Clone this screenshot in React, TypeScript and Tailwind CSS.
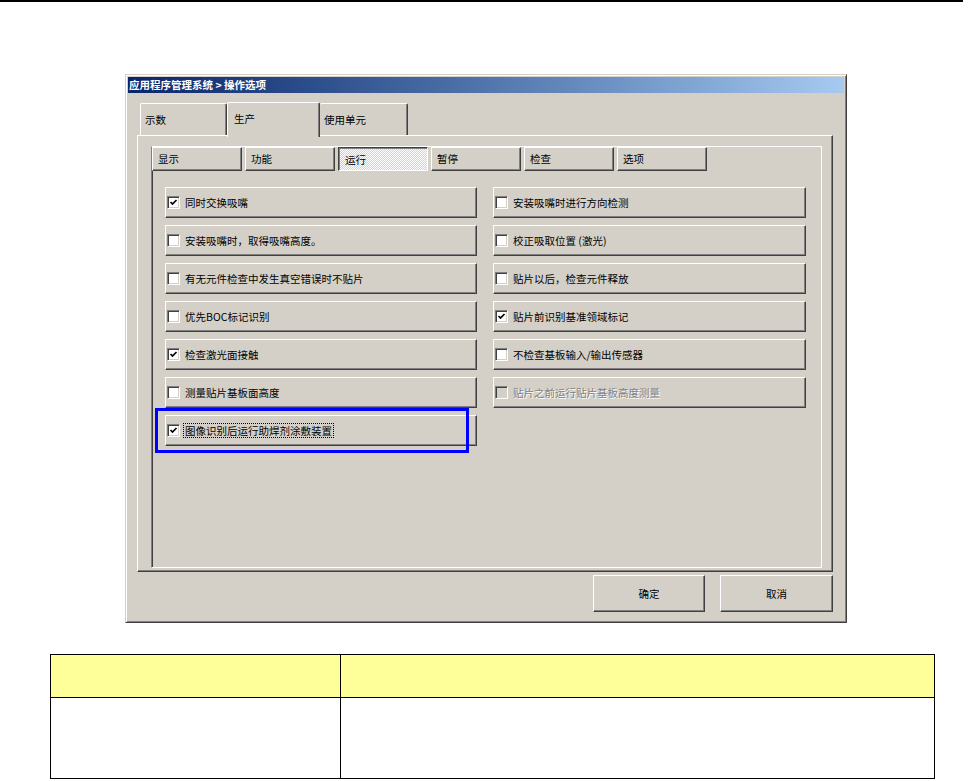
import React from 'react';

const FONT = { fontFamily: '"Noto Sans CJK SC", "Noto Sans", sans-serif' };

const raised =
  'border border-t-white border-l-white border-r-[#404040] border-b-[#404040] shadow-[inset_-1px_-1px_0_#808080]';

type Opt = { label: string; checked?: boolean; disabled?: boolean; focus?: boolean };

const leftOpts: Opt[] = [
  { label: '同时交换吸嘴', checked: true },
  { label: '安装吸嘴时，取得吸嘴高度。' },
  { label: '有无元件检查中发生真空错误时不贴片' },
  { label: '优先BOC标记识别' },
  { label: '检查激光面接触', checked: true },
  { label: '测量贴片基板面高度' },
  { label: '图像识别后运行助焊剂涂敷装置', checked: true, focus: true },
];

const rightOpts: Opt[] = [
  { label: '安装吸嘴时进行方向检测' },
  { label: '校正吸取位置 (激光)' },
  { label: '贴片以后，检查元件释放' },
  { label: '贴片前识别基准领域标记', checked: true },
  { label: '不检查基板输入/输出传感器' },
  { label: '贴片之前运行贴片基板高度测量', disabled: true },
];

const CheckBox: React.FC<{ checked?: boolean; disabled?: boolean }> = ({ checked, disabled }) => (
  <div
    className={`w-[13px] h-[13px] shrink-0 border border-t-[#808080] border-l-[#808080] border-r-white border-b-white shadow-[inset_1px_1px_0_#404040,inset_-1px_-1px_0_#d4d0c8] flex items-center justify-center ${
      disabled ? 'bg-[#d4d0c8]' : 'bg-white'
    }`}
  >
    {checked && (
      <svg width="9" height="9" viewBox="0 0 9 9">
        <path d="M1.5 4 L3.5 6 L7.5 2" fill="none" stroke={disabled ? '#808080' : '#000'} strokeWidth="1.7" />
      </svg>
    )}
  </div>
);

const OptionRow: React.FC<{ opt: Opt }> = ({ opt }) => (
  <div className={`h-[31px] ${raised} bg-[#d4d0c8] flex items-center pl-[1px]`}>
    <CheckBox checked={opt.checked} disabled={opt.disabled} />
    <span
      className={`ml-[3px] text-[10.5px] leading-[13px] ${
        opt.focus ? 'border border-dotted border-black px-[1px]' : 'px-[2px]'
      } ${opt.disabled ? 'text-[#808080] [text-shadow:1px_1px_0_#ffffff]' : 'text-black'}`}
    >
      {opt.label}
    </span>
  </div>
);

const innerTabs = ['显示', '功能', '运行', '暂停', '检查', '选项'];

export default function App() {
  return (
    <div className="relative w-[970px] h-[781px] bg-white overflow-hidden" style={FONT}>
      {/* page rule */}
      <div className="w-[963px] h-[2px] bg-black" />

      {/* dialog */}
      <div className="ml-[125px] mt-[72px] w-[722px] h-[549px] bg-[#d4d0c8] border border-t-[#d4d0c8] border-l-[#d4d0c8] border-r-[#404040] border-b-[#404040] shadow-[inset_1px_1px_0_#ffffff,inset_-1px_-1px_0_#808080] p-[2px] flex flex-col">
        <div className="h-[16px] bg-gradient-to-r from-[#0a246a] to-[#a6caf0] flex items-center pl-[1px]">
          <span className="text-white font-bold text-[10.5px] leading-none">应用程序管理系统 &gt; 操作选项</span>
        </div>

        {/* outer tabs */}
        <div className="mt-[9px] ml-[12px] h-[33px] flex items-end">
          <div className={`w-[87px] h-[32px] border-t border-l border-white border-r border-r-[#404040] shadow-[inset_-1px_0_0_#808080] rounded-t-[2px] flex items-center pl-[4px] text-[10.5px]`}>
            示数
          </div>
          <div className="relative z-10 w-[93px] h-[35px] -mb-[2px] bg-[#d4d0c8] border-t border-l border-white border-r border-r-[#404040] shadow-[inset_-1px_0_0_#808080] rounded-t-[2px] pl-[6px] pt-[8px] text-[10.5px]">
            生产
          </div>
          <div className={`w-[88px] h-[32px] border-t border-white border-r border-r-[#404040] shadow-[inset_-1px_0_0_#808080] rounded-t-[2px] flex items-center pl-[4px] text-[10.5px]`}>
            使用单元
          </div>
        </div>

        {/* tab panel */}
        <div className={`ml-[9px] w-[696px] h-[437px] ${raised} pt-[10px] pl-[13px]`}>
          <div className="w-[671px] h-[422px] border border-t-white border-r-white border-b-white border-l-[#808080] shadow-[inset_1px_0_0_#404040] flex flex-col">
            <div className="flex gap-[3px] h-[24px]">
              {innerTabs.map((t) =>
                t === '运行' ? (
                  <div
                    key={t}
                    className="w-[90px] h-[24px] border border-t-[#404040] border-l-[#404040] border-r-white border-b-white shadow-[inset_1px_1px_0_#808080] bg-[repeating-conic-gradient(#ffffff_0%_25%,#d4d0c8_0%_50%)] bg-[length:2px_2px] flex items-center pl-[6px] pt-[1px] text-[10.5px]"
                  >
                    {t}
                  </div>
                ) : (
                  <div key={t} className={`w-[90px] h-[24px] ${raised} flex items-center pl-[5px] text-[10.5px]`}>
                    {t}
                  </div>
                )
              )}
            </div>

            <div className="mt-[16px] ml-[13px] flex gap-[16px]">
              <div className="w-[312px] flex flex-col gap-[7px]">
                {leftOpts.map((o) => (
                  <OptionRow key={o.label} opt={o} />
                ))}
              </div>
              <div className="w-[313px] flex flex-col gap-[7px]">
                {rightOpts.map((o) => (
                  <OptionRow key={o.label} opt={o} />
                ))}
              </div>
            </div>
          </div>
        </div>

        {/* buttons */}
        <div className="mt-[3px] mr-[11px] flex justify-end gap-[15px]">
          <button className={`w-[112px] h-[37px] ${raised} bg-[#d4d0c8] text-[10.5px]`}>确定</button>
          <button className={`w-[113px] h-[37px] ${raised} bg-[#d4d0c8] text-[10.5px]`}>取消</button>
        </div>
      </div>

      {/* highlight marker */}
      <div className="absolute left-[155px] top-[408px] w-[314px] h-[45px] border-[3px] border-[#0000ff]" />

      {/* table */}
      <div className="ml-[50px] mt-[31px] w-[885px] border border-black">
        <div className="flex h-[43px] bg-[#ffff99] border-b border-black">
          <div className="w-[290px] border-r border-black" />
          <div className="flex-1" />
        </div>
        <div className="flex h-[80px] bg-white">
          <div className="w-[290px] border-r border-black" />
          <div className="flex-1" />
        </div>
      </div>
    </div>
  );
}
